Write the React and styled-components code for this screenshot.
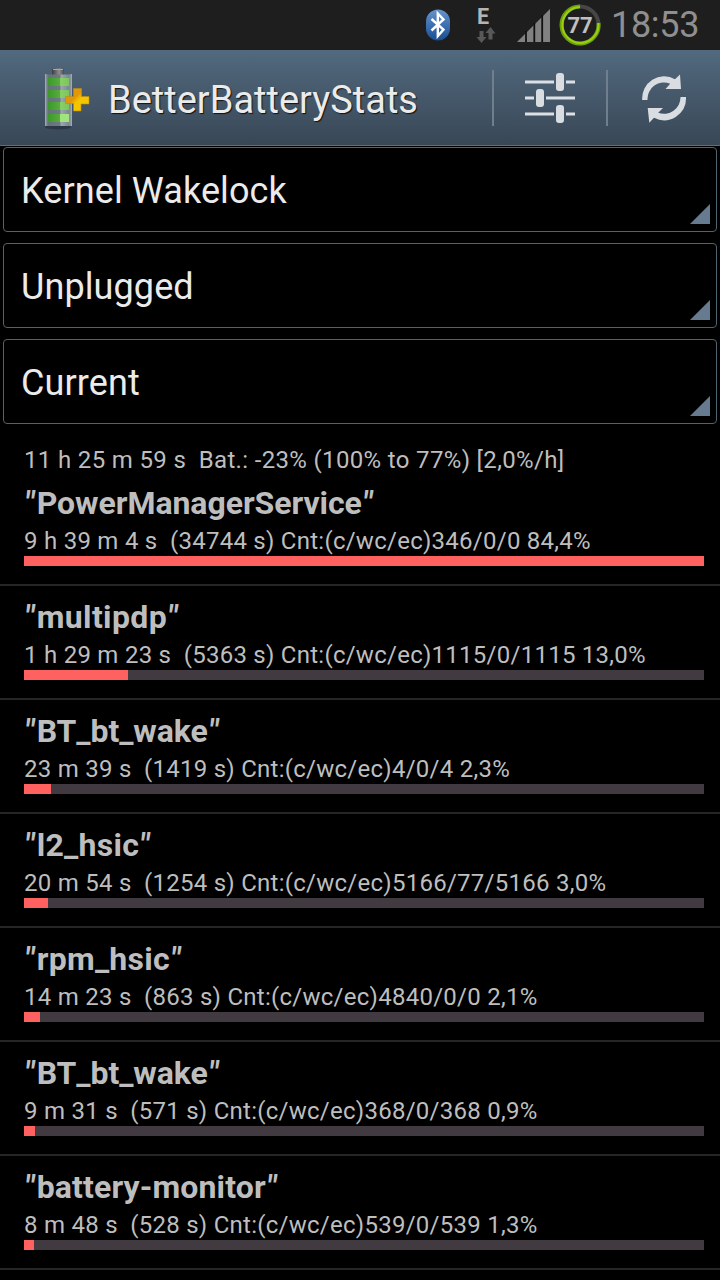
import React, {useState} from "react";
import styled, { createGlobalStyle } from 'styled-components';

const GlobalStyle = createGlobalStyle`
    * {
        box-sizing: border-box;
    }

    body {
        margin: 0;
        background: #000;
        font-family: Roboto, sans-serif;
    }
`;

const Screen = styled.main`
    width: 720px;
    height: 1280px;
    overflow: hidden;
    background: #000;
    color: #bebebe;
`;

const StatusBar = styled.div`
    display: flex;
    align-items: center;
    justify-content: flex-end;
    height: 50px;
    padding-right: 21px;
    background: #1e1e1e;
`;

const Clock = styled.span`
    width: 88px;
    margin-left: 10px;
    font-size: 36px;
    line-height: 50px;
    font-weight: 400;
    letter-spacing: -0.3px;
    color: #8f8f8f;
    white-space: nowrap;
`;

const ActionBar = styled.header`
    display: flex;
    align-items: center;
    height: 96px;
    padding-left: 40px;
    background: linear-gradient(#52697e, #384756);
    border-bottom: 1px solid #59717f;
`;

const AppTitle = styled.h1`
    flex: 1;
    margin: 0 0 0 16px;
    padding-top: 5px;
    font-size: 38px;
    font-weight: 400;
    color: #ebebeb;
    text-shadow: 1px 1px 1px #111;
`;

const Action = styled.button`
    display: flex;
    align-items: center;
    justify-content: center;
    width: 114px;
    height: 56px;
    padding: 0;
    border: 0;
    border-left: 2px solid #6f7f8d;
    background: none;
`;

const Spinners = styled.section`
    display: flex;
    flex-direction: column;
    gap: 11px;
    padding: 1px 3px 0;
`;

const Spinner = styled.div`
    display: flex;
    align-items: flex-end;
    justify-content: space-between;
    height: 85px;
    padding: 0 6px 7px 17px;
    border: 1px solid #4d6570;
    border-radius: 4px;
    font-size: 36px;
    line-height: 65px;
    letter-spacing: 0.1px;
    color: #ebebeb;
`;

const Corner = styled.i`
    width: 20px;
    height: 20px;
    background: #667b90;
    clip-path: polygon(100% 0, 100% 100%, 0 100%);
`;

const Summary = styled.p`
    height: 48px;
    margin: 0;
    padding: 22px 0 0 24px;
    font-size: 24px;
    line-height: 28px;
    letter-spacing: 0.34px;
    white-space: pre;
`;

const Row = styled.article`
    height: 114px;
    padding: 12px 16px 0 24px;
    border-bottom: 2px solid #262626;
`;

const Name = styled.h2`
    margin: 0 0 5px;
    font-size: 32px;
    line-height: 38px;
    font-weight: 700;
    letter-spacing: ${props => props.$spacing}px;
`;

const Quote = styled.span`
    display: inline-block;
    padding: 0 1.5px 0 1px;
    letter-spacing: 0;
    transform: skewX(-6deg);
`;

const Details = styled.p`
    margin: 0;
    font-size: 24px;
    line-height: 28px;
    letter-spacing: 0.26px;
    white-space: pre;
`;

const Track = styled.div`
    height: 10px;
    margin-top: 1px;
    background: #423a41;
`;

const Fill = styled.div`
    height: 10px;
    background: #ff6060;
`;

const BluetoothIcon = () => (
    <svg width="26" height="32" viewBox="0 0 26 32">
        <defs>
            <linearGradient id="bt" x1="0" y1="0" x2="0" y2="1">
                <stop offset="0" stopColor="#6693cc"/>
                <stop offset="1" stopColor="#174f94"/>
            </linearGradient>
        </defs>
        <rect x="1" y="0.5" width="24" height="31" rx="12" fill="url(#bt)"/>
        <path d="M6.5 10 L18.5 20.5 L12.8 27 V4.5 L18.5 10.5 L6.5 21.5" fill="none" stroke="#fff" strokeWidth="2.4"/>
    </svg>
);

const Network = styled.div`
    display: flex;
    flex-direction: column;
    align-items: flex-start;
    width: 22px;
    height: 36px;
    margin: 0 19px 0 25px;
    font-size: 21.5px;
    line-height: 20px;
    font-weight: 700;
    color: #b4b4b4;
    text-indent: 1px;
`;

const DataArrows = () => (
    <svg width="22" height="16" viewBox="0 0 22 16">
        <path d="M3.5 4 h4 v6 h3 L5.5 16 L0.5 10 h3z M12.5 12.5 h4 v-6 h3 L14.5 0 L9.5 6 h3z" fill="#585858"/>
    </svg>
);

const SignalIcon = () => (
    <svg width="34" height="33" viewBox="0 0 34 33">
        <path d="M0 33 L33 0 V33z" fill="#818181"/>
        <path d="M9 22v11M17.3 14v19M25.2 6v27" stroke="#111" strokeWidth="1.8"/>
    </svg>
);

const BatteryRing = styled.svg`
    margin-left: 8px;
    font: 700 22px Roboto, sans-serif;
`;

const RingBattery = ({level}) => (
    <BatteryRing width="42" height="42" viewBox="0 0 42 42">
        <circle cx="21" cy="21" r="18.5" fill="none" stroke="#464646" strokeWidth="4"/>
        <path d="M39.5 19 A18.5 18.5 0 1 1 21 2.5" fill="none" stroke="#6ea00a" strokeWidth="4"/>
        <path d="M39.3 19 A18 18 0 1 1 21 3" fill="none" stroke="#97d013" strokeWidth="2"/>
        <text x="21" y="29" textAnchor="middle" fill="#c0c0c0">{level}</text>
    </BatteryRing>
);

const AppIcon = () => (
    <svg width="52" height="64" viewBox="0 0 52 64">
        <defs>
            <linearGradient id="cell" x1="0" y1="0" x2="1" y2="0">
                <stop offset="0" stopColor="#3b9928"/>
                <stop offset="0.55" stopColor="#55ad3d"/>
                <stop offset="0.6" stopColor="#88d067"/>
                <stop offset="1" stopColor="#7cc45c"/>
            </linearGradient>
            <linearGradient id="can" x1="0" y1="0" x2="1" y2="0">
                <stop offset="0" stopColor="#9aa3aa"/>
                <stop offset="0.12" stopColor="#64717c"/>
                <stop offset="0.55" stopColor="#6d7983"/>
                <stop offset="0.6" stopColor="#9ca8b0"/>
                <stop offset="0.88" stopColor="#7b8790"/>
                <stop offset="1" stopColor="#969fa6"/>
            </linearGradient>
            <linearGradient id="cap" x1="0" y1="0" x2="1" y2="0">
                <stop offset="0" stopColor="#3c3c3e"/>
                <stop offset="0.6" stopColor="#8e8e90"/>
                <stop offset="1" stopColor="#4a4a4c"/>
            </linearGradient>
            <linearGradient id="plus" x1="0" y1="0" x2="1" y2="1">
                <stop offset="0.4" stopColor="#e2970a"/>
                <stop offset="0.55" stopColor="#f4c600"/>
            </linearGradient>
        </defs>
        <ellipse cx="18" cy="61" rx="13" ry="2.5" fill="#2c3843"/>
        <rect x="12" y="2.500" width="12" height="6.500" rx="1" fill="url(#cap)"/>
        <path d="M13 3.5 h10" stroke="#a7aaad"/>
        <path d="M5 8 L9 8.500 H28 L32 8 V60 H5z" fill="url(#can)"/>
        <path d="M5.5 8v52M31.5 8v52" stroke="#a1a8ad"/>
        <path d="M8 12h21v8H8z M8 24h21v8H8z M8 36h21v8H8z M8 48h21v8H8z" fill="url(#cell)"/>
        <path d="M20 48h9v8H20z" fill="#a1e47f"/>
        <path d="M33.5 22.5h8v8H49v7.5h-8v7h-7.5v-7.500h-8v-7h8z" fill="url(#plus)" stroke="#c08a10" strokeWidth="0.6"/>
    </svg>
);

const SlidersIcon = () => (
    <svg width="50" height="52" viewBox="0 0 50 52">
        <path d="M0 10h29M41 10h9M0 26h9M21 26h29M0 42h29M41 42h9" stroke="#dce0e4" strokeWidth="3"/>
        <g fill="#d9dde1">
            <rect x="31" y="1" width="8" height="18" rx="3"/>
            <rect x="11" y="17" width="8" height="18" rx="3"/>
            <rect x="31" y="33" width="8" height="18" rx="3"/>
        </g>
    </svg>
);

const RefreshIcon = () => (
    <svg width="46" height="50" viewBox="0 0 46 50">
        <g fill="#d9dde1">
            <path d="M1.2 27 A22 22 0 0 1 34 6.2 L39 1.5 L40 16 H24.5 L29.2 10.7 A16.5 16.5 0 0 0 6.5 27z"/>
            <path d="M45 24 A22 22 0 0 1 13 44.8 L8.3 49.7 L6.7 35 H22 L17.2 39.8 A16.5 16.5 0 0 0 39.5 24z"/>
        </g>
    </svg>
);

const wakelocks = [
    {name: 'PowerManagerService', details: '9 h 39 m 4 s  (34744 s) Cnt:(c/wc/ec)346/0/0 84,4%', fill: 680, spacing: -0.05},
    {name: 'multipdp', details: '1 h 29 m 23 s  (5363 s) Cnt:(c/wc/ec)1115/0/1115 13,0%', fill: 104, spacing: 0.37},
    {name: 'BT_bt_wake', details: '23 m 39 s  (1419 s) Cnt:(c/wc/ec)4/0/4 2,3%', fill: 27, spacing: -0.08},
    {name: 'l2_hsic', details: '20 m 54 s  (1254 s) Cnt:(c/wc/ec)5166/77/5166 3,0%', fill: 24, spacing: 0.28},
    {name: 'rpm_hsic', details: '14 m 23 s  (863 s) Cnt:(c/wc/ec)4840/0/0 2,1%', fill: 16, spacing: 0.25},
    {name: 'BT_bt_wake', details: '9 m 31 s  (571 s) Cnt:(c/wc/ec)368/0/368 0,9%', fill: 11, spacing: -0.08},
    {name: 'battery-monitor', details: '8 m 48 s  (528 s) Cnt:(c/wc/ec)539/0/539 1,3%', fill: 10, spacing: 0.13},
];

const App = () => {
    const [filters] = useState(['Kernel Wakelock', 'Unplugged', 'Current']);

    return(
        <Screen>
            <GlobalStyle/>
            <StatusBar>
                <BluetoothIcon/>
                <Network>
                    E
                    <DataArrows/>
                </Network>
                <SignalIcon/>
                <RingBattery level={77}/>
                <Clock>18:53</Clock>
            </StatusBar>
            <ActionBar>
                <AppIcon/>
                <AppTitle>BetterBatteryStats</AppTitle>
                <Action aria-label="Preferences"><SlidersIcon/></Action>
                <Action aria-label="Refresh"><RefreshIcon/></Action>
            </ActionBar>
            <Spinners>
                {filters.map(label => (
                    <Spinner key={label}>
                        <span>{label}</span>
                        <Corner/>
                    </Spinner>
                ))}
            </Spinners>
            <Summary>11 h 25 m 59 s  Bat.: -23% (100% to 77%) [2,0%/h]</Summary>
            {wakelocks.map((lock, index) => (
                <Row key={index}>
                    <Name $spacing={lock.spacing}>
                        <Quote>"</Quote>{lock.name}<Quote>"</Quote>
                    </Name>
                    <Details>{lock.details}</Details>
                    <Track>
                        <Fill style={{width: lock.fill}}/>
                    </Track>
                </Row>
            ))}
        </Screen>
    )
};

export default App;
